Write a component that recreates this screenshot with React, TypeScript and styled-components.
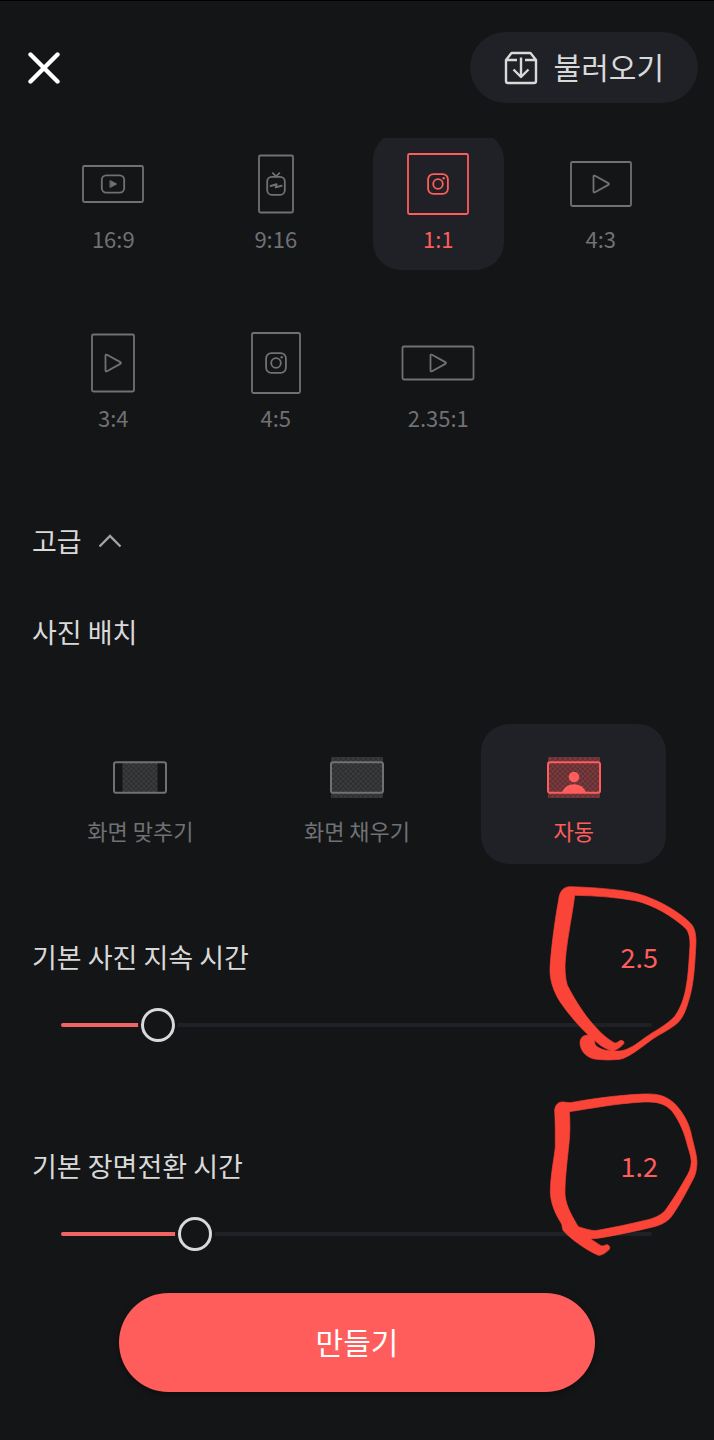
import React, { useId, useState } from "react";
import styled, { createGlobalStyle } from "styled-components";

const color = {
  page: "#141517",
  panel: "#202126",
  text: "#d9d9da",
  muted: "#707173",
  accent: "#ff5c5c",
  marker: "#f94437",
};

const GlobalStyle = createGlobalStyle`
  *, *::before, *::after { box-sizing: border-box; }
  body {
    margin: 0;
    background: ${color.page};
    color: ${color.text};
    font-family: "Noto Sans CJK KR", "Noto Sans", sans-serif;
  }
  button, input { font: inherit; }
`;

const Screen = styled.div`
  display: flex;
  flex-direction: column;
  min-height: 100vh;
  border-top: 1px solid #000;
`;

const Header = styled.header`
  display: flex;
  align-items: center;
  justify-content: space-between;
  padding: 31px 16px 35px 28px;
`;

const CloseButton = styled.button`
  display: flex;
  padding: 0;
  border: 0;
  background: none;
  color: #fff;
`;

const ImportButton = styled.button`
  display: flex;
  align-items: center;
  gap: 16px;
  height: 71px;
  padding: 0 34px;
  border: 0;
  border-radius: 36px;
  background: ${color.panel};
  color: ${color.text};
  font-size: 30px;
  line-height: 40px;
`;

const ButtonText = styled.span`
  padding-bottom: 4px;
`;

const Content = styled.main`
  display: flex;
  flex-direction: column;
  padding-bottom: 12px;
  overflow: hidden;
`;

const OptionGrid = styled.div<{ $columns: number }>`
  display: grid;
  grid-template-columns: repeat(${(p) => p.$columns}, 1fr);
  gap: 41px 32px;
  padding: 0 48px;
`;

const RatioGrid = styled(OptionGrid)`
  margin-top: -6px;
`;

const LayoutGrid = styled(OptionGrid)`
  margin-top: 72px;
`;

const OptionCard = styled.label<{ $selected: boolean; $height: number }>`
  display: flex;
  flex-direction: column;
  align-items: center;
  height: ${(p) => p.$height}px;
  padding-top: 20px;
  border-radius: 28px;
  background: ${(p) => (p.$selected ? color.panel : "transparent")};
  color: ${(p) => (p.$selected ? color.accent : color.muted)};
  font-size: 22px;
  line-height: 44px;
  white-space: nowrap;
`;

const HiddenRadio = styled.input`
  appearance: none;
  width: 0;
  height: 0;
  margin: 0;
`;

const AdvancedToggle = styled.button`
  display: flex;
  align-items: center;
  align-self: flex-start;
  gap: 16px;
  margin: 72px 0 0 32px;
  padding: 0;
  border: 0;
  background: none;
  color: ${color.text};
  font-size: 27px;
  line-height: 40px;
`;

const SectionTitle = styled.h2`
  margin: 51px 32px 0;
  font-size: 27px;
  font-weight: 400;
  line-height: 40px;
`;

const SliderBlock = styled.section<{ $gap: number }>`
  position: relative;
  margin-top: ${(p) => p.$gap}px;
`;

const SliderHeading = styled.div`
  display: flex;
  justify-content: space-between;
  padding: 0 56px 0 32px;
  font-size: 27px;
  line-height: 40px;
`;

const SliderValue = styled.output`
  color: ${color.accent};
`;

const SliderArea = styled.div`
  display: grid;
  align-items: center;
  margin: 31px 45px 0 44px;
`;

const Rail = styled.div`
  grid-area: 1 / 1;
  height: 4px;
  margin: 0 17px;
  border-radius: 2px;
  overflow: hidden;
  background: ${color.panel};
`;

const RailFill = styled.div`
  height: 100%;
  background: #f26363;
`;

const Range = styled.input`
  grid-area: 1 / 1;
  appearance: none;
  width: 100%;
  height: 34px;
  margin: 0;
  background: transparent;

  &::-webkit-slider-thumb {
    appearance: none;
    width: 34px;
    height: 34px;
    border: 3px solid ${color.text};
    border-radius: 50%;
    background: ${color.page};
    box-shadow: 0 0 0 3px ${color.page};
  }
`;

const Scribble = styled.svg<{ $top: number }>`
  position: absolute;
  top: ${(p) => p.$top}px;
  right: 0;
  z-index: 1;
  pointer-events: none;
  fill: ${color.marker};
  stroke: ${color.marker};
  stroke-width: 2;
`;

const Footer = styled.footer`
  display: flex;
  padding: 30px 119px 48px;
`;

const CreateButton = styled.button`
  display: flex;
  flex: 1;
  align-items: center;
  justify-content: center;
  height: 99px;
  padding: 0;
  border: 0;
  border-radius: 50px;
  background: ${color.accent};
  box-shadow: 0 2px 6px rgba(0, 0, 0, 0.4);
  color: #fff;
  font-size: 30px;
  line-height: 40px;
`;

type Glyph = "youtube" | "igtv" | "instagram" | "play";

function GlyphShape({ glyph }: { glyph: Glyph }) {
  switch (glyph) {
    case "youtube":
      return (
        <>
          <rect x="-11.2" y="-8.6" width="22.4" height="17.2" rx="4.5" />
          <path d="M-2.6-3.3 3.6 0-2.6 3.3Z" fill="currentColor" strokeWidth="1" />
        </>
      );
    case "igtv":
      return (
        <>
          <path d="M-3.2-10.8 0-7.7 3.4-10.8" />
          <rect x="-8.8" y="-7.2" width="17.6" height="18" rx="4.5" />
          <path d="M-5.4 2 .6.2-.2 3.4 5.6 1.8" strokeWidth="2" />
        </>
      );
    case "instagram":
      return (
        <>
          <rect x="-9.9" y="-9.9" width="19.8" height="19.8" rx="5.2" />
          <circle r="4.8" />
          <circle cx="5.7" cy="-5.7" r="1.2" fill="currentColor" stroke="none" />
        </>
      );
    default:
      return <path d="M-7.5-7.4V7.4Q-7.5 9-6 8.2L7.3.9Q8.6 0 7.3-.9L-6-8.2Q-7.5-9-7.5-7.4Z" />;
  }
}

function RatioIcon({ width, height, glyph }: { width: number; height: number; glyph: Glyph }) {
  return (
    <svg width="76" height="64" viewBox="-38 -32 76 64" fill="none" stroke="currentColor" strokeWidth="1.8" strokeLinejoin="round" strokeLinecap="round" aria-hidden="true">
      <rect x={1 - width / 2} y={1 - height / 2} width={width - 2} height={height - 2} rx="1.5" />
      <GlyphShape glyph={glyph} />
    </svg>
  );
}

type Placement = "fit" | "fill" | "auto";

function PlacementIcon({ kind }: { kind: Placement }) {
  const id = useId();
  return (
    <svg width="64" height="64" viewBox="-32 -33.500 64 64" fill="none" aria-hidden="true">
      <defs>
        <pattern id={id} width="5" height="5" patternUnits="userSpaceOnUse">
          <rect width="5" height="5" fill="currentColor" opacity=".26" />
          <path d="M0 0h2.5v2.5H0zM2.5 2.5H5V5H2.5z" fill="currentColor" opacity=".24" />
        </pattern>
      </defs>
      {kind === "fit" ? (
        <rect x="-17.5" y="-15" width="35" height="30" fill={`url(#${id})`} />
      ) : (
        <rect x="-26" y="-20.5" width="52" height="41" rx="1" fill={`url(#${id})`} />
      )}
      {kind === "auto" && (
        <g fill="currentColor">
          <circle cy="-.5" r="5.3" />
          <path d="M-12 15C-10 9.500-5.500 6.700 0 6.700S10 9.500 12 15Z" />
        </g>
      )}
      <rect x="-26" y="-15.200" width="52" height="30.400" rx="2" stroke="currentColor" strokeWidth="2" />
    </svg>
  );
}

const ratios: { label: string; width: number; height: number; glyph: Glyph }[] = [
  { label: "16:9", width: 62, height: 38, glyph: "youtube" },
  { label: "9:16", width: 36, height: 59, glyph: "igtv" },
  { label: "1:1", width: 62, height: 62, glyph: "instagram" },
  { label: "4:3", width: 62, height: 46, glyph: "play" },
  { label: "3:4", width: 44, height: 59, glyph: "play" },
  { label: "4:5", width: 50, height: 62, glyph: "instagram" },
  { label: "2.35:1", width: 73, height: 35, glyph: "play" },
];

const placements: { label: string; kind: Placement }[] = [
  { label: "화면 맞추기", kind: "fit" },
  { label: "화면 채우기", kind: "fill" },
  { label: "자동", kind: "auto" },
];

interface TimeSliderProps {
  label: string;
  initial: number;
  min: number;
  max: number;
  gap: number;
  children: React.ReactNode;
}

function TimeSlider({ label, initial, min, max, gap, children }: TimeSliderProps) {
  const id = useId();
  const [value, setValue] = useState(initial);
  return (
    <SliderBlock $gap={gap}>
      <SliderHeading>
        <label htmlFor={id}>{label}</label>
        <SliderValue htmlFor={id}>{value.toFixed(1)}</SliderValue>
      </SliderHeading>
      <SliderArea>
        <Rail>
          <RailFill style={{ width: `${((value - min) / (max - min)) * 100}%` }} />
        </Rail>
        <Range id={id} type="range" min={min} max={max} step={0.1} value={value} onChange={(e) => setValue(Number(e.target.value))} />
      </SliderArea>
      {children}
    </SliderBlock>
  );
}

export default function App() {
  const [ratio, setRatio] = useState("1:1");
  const [placement, setPlacement] = useState<Placement>("auto");

  return (
    <Screen>
      <GlobalStyle />
      <Header>
        <CloseButton type="button" aria-label="닫기">
          <svg width="32" height="32" viewBox="0 0 32 32" stroke="currentColor" strokeWidth="4.400" strokeLinecap="round">
            <path d="M2.500 2.500 29.500 29.500M29.500 2.500 2.500 29.500" />
          </svg>
        </CloseButton>
        <ImportButton type="button">
          <svg width="34" height="34" viewBox="0 0 34 34" fill="none" stroke="currentColor" strokeWidth="2.400" strokeLinejoin="round" aria-hidden="true">
            <path d="M13 9H2L7.500 2H26.500L32 9H21M2 9V30Q2 32 4 32H30Q32 32 32 30V9" />
            <path d="M17 6.500V26M9.500 18.500 17 26 24.500 18.500" />
          </svg>
          <ButtonText>불러오기</ButtonText>
        </ImportButton>
      </Header>

      <Content>
        <RatioGrid $columns={4} role="radiogroup" aria-label="화면 비율">
          {ratios.map((r) => (
            <OptionCard key={r.label} $selected={r.label === ratio} $height={138}>
              <HiddenRadio type="radio" name="ratio" checked={r.label === ratio} onChange={() => setRatio(r.label)} />
              <RatioIcon width={r.width} height={r.height} glyph={r.glyph} />
              {r.label}
            </OptionCard>
          ))}
        </RatioGrid>

        <AdvancedToggle type="button" aria-expanded="true">
          고급
          <svg width="24" height="14" viewBox="0 0 24 14" fill="none" stroke="#a3a3a4" strokeWidth="2.400" aria-hidden="true">
            <path d="M1.500 12.500 12 2 22.500 12.500" />
          </svg>
        </AdvancedToggle>

        <SectionTitle>사진 배치</SectionTitle>
        <LayoutGrid $columns={3} role="radiogroup" aria-label="사진 배치">
          {placements.map((p) => (
            <OptionCard key={p.kind} $selected={p.kind === placement} $height={140}>
              <HiddenRadio type="radio" name="placement" checked={p.kind === placement} onChange={() => setPlacement(p.kind)} />
              <PlacementIcon kind={p.kind} />
              {p.label}
            </OptionCard>
          ))}
        </LayoutGrid>

        <TimeSlider label="기본 사진 지속 시간" initial={2.5} min={0.7} max={11.7} gap={73}>
          <Scribble $top={-67} width="184" height="200" viewBox="0 0 552 600" fillRule="evenodd" aria-hidden="true">
            <path d="M86 90C88 65 100 50 120 50C190 52 260 58 300 66C360 76 440 118 480 158C495 172 498 195 498 215C494 300 490 350 475 395C468 420 460 440 445 457C425 476 390 492 365 509C330 535 300 560 270 568Q235 572 200 568C175 566 152 548 150 520C150 505 158 495 175 495C150 472 115 432 90 395C72 366 60 335 60 300C62 240 78 130 86 90ZM134 76C128 130 112 200 106 270C104 290 105 325 112 346C140 400 170 445 205 480C222 498 235 508 252 518C258 520 262 518 268 513C275 508 283 513 282 520C275 530 262 538 250 543L270 543C295 540 320 522 345 503C370 485 410 465 433 440C450 418 464 385 470 340C474 320 476 290 480 225C480 205 478 190 468 176C430 140 370 104 315 92C260 82 200 77 134 76ZM194 511C210 528 230 538 245 542C225 543 205 535 197 526Q193 520 194 511Z" />
          </Scribble>
        </TimeSlider>

        <TimeSlider label="기본 장면전환 시간" initial={1.2} min={0} max={5.3} gap={104}>
          <Scribble $top={-66} width="184" height="190" viewBox="0 0 552 570" fillRule="evenodd" aria-hidden="true">
            <path d="M74 90C76 72 88 64 100 66L120 68C180 58 250 46 340 42C385 40 410 48 435 72C455 92 475 125 482 155C488 185 500 220 501 245C500 270 497 285 488 300C465 345 440 390 420 415C405 430 385 438 360 443C310 455 260 465 215 473Q200 476 181 476C195 485 205 492 213 497C220 500 226 494 230 494C238 494 241 502 238 508C228 518 218 526 205 526C170 510 125 480 100 452C96 445 97 438 95 432C75 400 62 370 61 335C62 280 72 240 76 200C76 160 76 130 74 90ZM118 95C120 120 121 155 117 190C112 240 104 300 105 345C108 380 130 415 145 440C160 445 180 451 195 452C240 445 300 432 350 420C370 415 390 408 405 392C425 365 450 325 468 292C476 280 483 265 484 245C483 225 474 205 468 180C460 150 445 118 425 92C405 72 385 64 340 66C260 70 180 86 118 95Z" />
          </Scribble>
        </TimeSlider>
      </Content>

      <Footer>
        <CreateButton type="button">
          <ButtonText>만들기</ButtonText>
        </CreateButton>
      </Footer>
    </Screen>
  );
}
